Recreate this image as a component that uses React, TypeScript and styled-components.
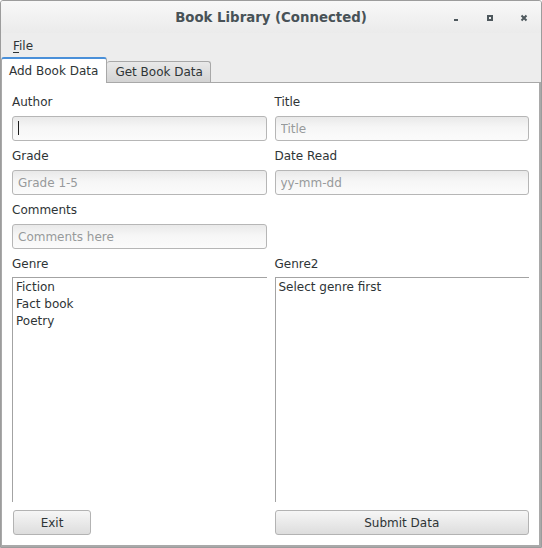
import React from "react";
import styled, { createGlobalStyle } from "styled-components";

const GlobalStyle = createGlobalStyle`
  html, body {
    margin: 0;
    padding: 0;
    background: #ffffff;
  }
  * {
    box-sizing: border-box;
  }
`;

const FONT = `"DejaVu Sans", "Liberation Sans", sans-serif`;

const Window = styled.div`
  width: 542px;
  height: 548px;
  display: flex;
  flex-direction: column;
  border: 1px solid #9c9c9c;
  border-radius: 3px 3px 0 0;
  background: #ededed;
  font-family: ${FONT};
  font-size: 12px;
  color: #2e3436;
  overflow: hidden;
`;

const TitleBar = styled.div`
  height: 32px;
  flex: 0 0 32px;
  display: grid;
  grid-template-columns: 102px 1fr 102px;
  align-items: center;
  background: linear-gradient(to bottom, #f8f8f8, #ebebeb);
`;

const Title = styled.div`
  text-align: center;
  font-weight: bold;
  font-size: 13.3px;
  color: #485257;
  padding-top: 1px;
`;

const Controls = styled.div`
  display: flex;
  height: 100%;
`;

const ControlButton = styled.div`
  width: 34px;
  display: flex;
  align-items: center;
  justify-content: center;
  padding-top: 2px;
  color: #4e585d;
`;

const MenuBar = styled.div`
  height: 24px;
  flex: 0 0 24px;
  display: flex;
  align-items: center;
  padding-left: 12px;
  background: #ededed;
`;

const MenuItem = styled.span`
  font-size: 12px;
  color: #2e3436;
  padding-top: 1px;
`;

const Mnemonic = styled.span`
  text-decoration: underline;
  text-underline-offset: 2px;
`;

const TabRow = styled.div`
  height: 26px;
  flex: 0 0 26px;
  display: flex;
  align-items: flex-end;
  border-bottom: 1px solid #a8a8a8;
`;

const Tab = styled.div<{ $active?: boolean }>`
  display: flex;
  align-items: center;
  justify-content: center;
  font-size: 12px;
  color: #2e3436;
  border: 1px solid #a8a8a8;
  border-bottom: none;
  border-radius: 3px 3px 0 0;
  ${(p) =>
    p.$active
      ? `
    height: 26px;
    margin-bottom: -1px;
    padding: 0 8px 0 7px;
    background: #ffffff;
    border-top: 2px solid #4a90d9;
  `
      : `
    height: 21px;
    padding: 0 7px 1px 8px;
    background: linear-gradient(to bottom, #e9e9e9, #d3d3d3);
    border-left: none;
  `}
`;

const Page = styled.div`
  flex: 1;
  display: flex;
  flex-direction: column;
  background: #ffffff;
  border-style: solid;
  border-color: #a9a9a9;
  border-width: 0 2px 2px 1px;
  padding: 10px;
`;

const FormGrid = styled.div`
  display: grid;
  grid-template-columns: 1fr 1fr;
  column-gap: 8px;
`;

const Cell = styled.div`
  display: flex;
  flex-direction: column;
  padding-bottom: 6px;
`;

const Label = styled.label`
  height: 17px;
  line-height: 15px;
  padding-top: 2px;
  margin-bottom: 6px;
  font-size: 12px;
  color: #2e3436;
`;

const InputWrap = styled.div`
  position: relative;
  height: 25px;
`;

const Input = styled.input`
  width: 100%;
  height: 25px;
  margin: 0;
  padding: 0 5px;
  border: 1px solid #b6b6b6;
  border-radius: 3px;
  background: linear-gradient(to bottom, #e9e9e9, #f6f6f6 45%, #fbfbfb);
  font-family: ${FONT};
  font-size: 12px;
  color: #2e3436;
  outline: none;

  &::placeholder {
    color: #979a9b;
  }
`;

const Caret = styled.span`
  position: absolute;
  left: 6px;
  top: 5px;
  width: 1px;
  height: 14px;
  background: #1e1e1e;
`;

const ListGrid = styled.div`
  flex: 1;
  display: grid;
  grid-template-columns: 1fr 1fr;
  column-gap: 8px;
  min-height: 0;
`;

const ListCell = styled.div`
  display: flex;
  flex-direction: column;
  min-height: 0;
`;

const ListLabel = styled(Label)`
  margin-bottom: 5px;
`;

const ListBox = styled.ul`
  flex: 1;
  margin: 0;
  padding: 1px 0 0 0;
  list-style: none;
  border-top: 1px solid #a3a3a3;
  border-left: 1px solid #a3a3a3;
  background: #ffffff;
`;

const ListItem = styled.li`
  height: 17px;
  line-height: 17px;
  padding-left: 3px;
  font-size: 12px;
  color: #2e3436;
`;

const ButtonRow = styled.div`
  display: grid;
  grid-template-columns: 1fr 1fr;
  column-gap: 8px;
  margin-top: 8px;
`;

const Button = styled.button<{ $narrow?: boolean }>`
  height: 25px;
  width: ${(p) => (p.$narrow ? "78px" : "100%")};
  margin-left: ${(p) => (p.$narrow ? "1px" : "0")};
  justify-self: start;
  padding: 0;
  border: 1px solid #b3b3b3;
  border-radius: 3px;
  background: linear-gradient(to bottom, #f6f6f6, #dddddd);
  font-family: ${FONT};
  font-size: 12px;
  color: #2e3436;
`;

const MinimizeIcon = () => (
  <svg width="8" height="8" viewBox="0 0 8 8">
    <rect x="2" y="5" width="4" height="2" fill="currentColor" />
  </svg>
);

const MaximizeIcon = () => (
  <svg width="8" height="8" viewBox="0 0 8 8">
    <rect x="1" y="1" width="6" height="6" fill="currentColor" />
    <rect x="3" y="3" width="2" height="2" fill="#f0f0f0" />
  </svg>
);

const CloseIcon = () => (
  <svg width="8" height="8" viewBox="0 0 8 8">
    <path d="M1.5 1.5 L6.5 6.5 M6.5 1.5 L1.5 6.5" stroke="currentColor" strokeWidth="2" />
  </svg>
);

const fields = [
  { label: "Author", placeholder: "", caret: true },
  { label: "Title", placeholder: "Title" },
  { label: "Grade", placeholder: "Grade 1-5" },
  { label: "Date Read", placeholder: "yy-mm-dd" },
  { label: "Comments", placeholder: "Comments here" },
];

export default function App() {
  return (
    <>
      <GlobalStyle />
      <Window>
        <TitleBar>
          <div />
          <Title>Book Library (Connected)</Title>
          <Controls>
            <ControlButton>
              <MinimizeIcon />
            </ControlButton>
            <ControlButton>
              <MaximizeIcon />
            </ControlButton>
            <ControlButton>
              <CloseIcon />
            </ControlButton>
          </Controls>
        </TitleBar>
        <MenuBar>
          <MenuItem>
            <Mnemonic>F</Mnemonic>ile
          </MenuItem>
        </MenuBar>
        <TabRow>
          <Tab $active>Add Book Data</Tab>
          <Tab>Get Book Data</Tab>
        </TabRow>
        <Page>
          <FormGrid>
            {fields.map((f) => (
              <Cell key={f.label}>
                <Label>{f.label}</Label>
                <InputWrap>
                  <Input placeholder={f.placeholder} readOnly />
                  {f.caret ? <Caret /> : null}
                </InputWrap>
              </Cell>
            ))}
          </FormGrid>
          <ListGrid>
            <ListCell>
              <ListLabel>Genre</ListLabel>
              <ListBox>
                <ListItem>Fiction</ListItem>
                <ListItem>Fact book</ListItem>
                <ListItem>Poetry</ListItem>
              </ListBox>
            </ListCell>
            <ListCell>
              <ListLabel>Genre2</ListLabel>
              <ListBox>
                <ListItem>Select genre first</ListItem>
              </ListBox>
            </ListCell>
          </ListGrid>
          <ButtonRow>
            <Button $narrow>Exit</Button>
            <Button>Submit Data</Button>
          </ButtonRow>
        </Page>
      </Window>
    </>
  );
}
